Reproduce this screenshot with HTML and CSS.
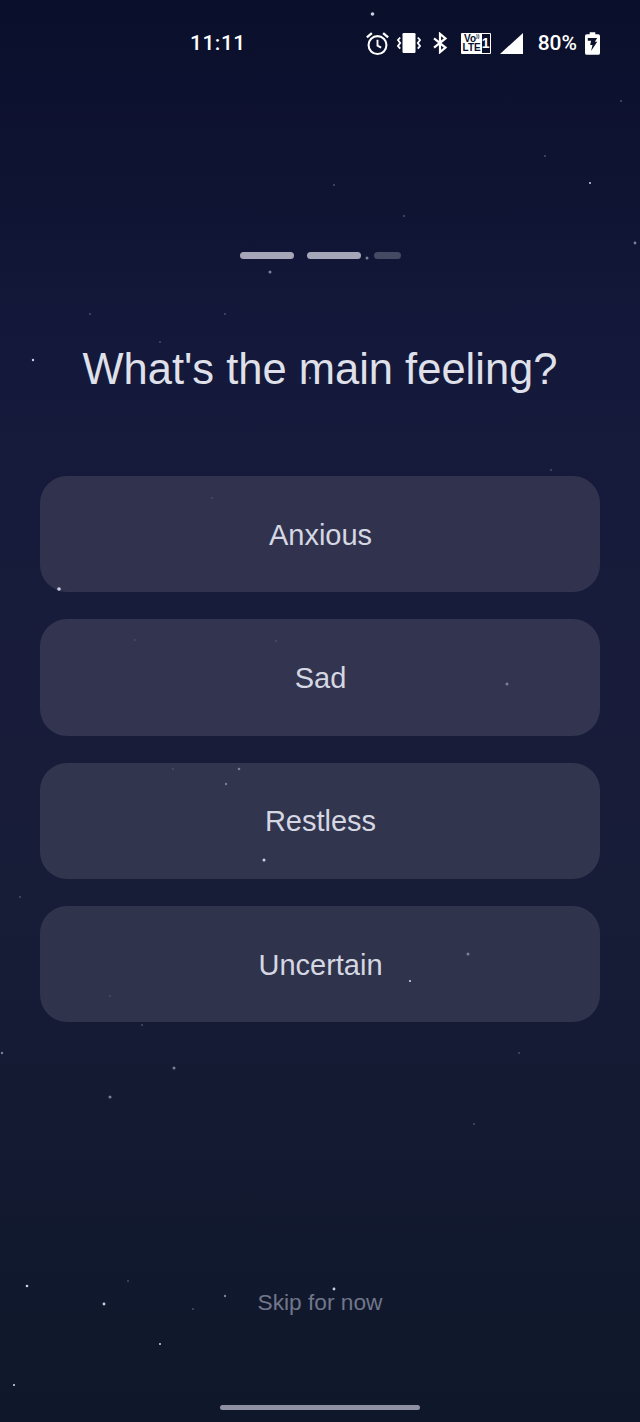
FILE: index.html
```html
<!DOCTYPE html>
<html lang="en">
<head>
<meta charset="utf-8">
<title>Main feeling</title>
<link rel="stylesheet" href="styles.css">
</head>
<body>
<div class="screen">
  <header class="status">
    <span class="time">11:11</span>
    <div class="status-icons">
      <svg class="ic-alarm" viewBox="0 0 24 24" fill="none" stroke="#fff"><circle cx="12" cy="13.5" r="8.6" stroke-width="2"/><path d="M12 8.500v5.500l3.500 2" stroke-width="1.800"/><path d="M1.800 6.200 6.600 2M22.200 6.200 17.400 2" stroke-width="2.200"/></svg>
      <svg class="ic-vib" viewBox="0 0 24 24" fill="none" stroke="#fff" stroke-width="1.800"><rect x="5.500" y="2" width="13" height="20" rx="1.200" fill="#fff" stroke="none"/><path d="M3.200 6.500 1 9l2.200 3L1 15l2.200 2.600M20.800 6.500 23 9l-2.200 3 2.200 3-2.200 2.600"/></svg>
      <svg class="ic-bt" viewBox="0 0 16 24" fill="none" stroke="#fff" stroke-width="2.400"><path d="M1.500 7 14 17l-6 5V2l6 5L1.500 17"/></svg>
      <span class="ic-volte"><span class="volte-box"><span>Vo<sup>))</sup></span><span>LTE</span></span><span class="volte-sim">1</span></span>
      <svg class="ic-signal" viewBox="0 0 24 24" preserveAspectRatio="none"><path d="M0 24 24 0v24z" fill="#fff"/></svg>
      <span class="pct">80%</span>
      <svg class="ic-batt" viewBox="0 0 16 24"><path d="M5 0h6v2h3a2 2 0 0 1 2 2v18a2 2 0 0 1-2 2H2a2 2 0 0 1-2-2V4a2 2 0 0 1 2-2h3z" fill="#fff"/><path d="M3 6h10l-2.500 4H13L6.500 20l1.500-6.500H5.500L6.500 9H3z" fill="#0b0f2c"/></svg>
    </div>
  </header>

  <div class="progress">
    <span class="seg on"></span>
    <span class="seg on"></span>
    <span class="seg off"></span>
  </div>

  <h1 class="title">What's the main feeling?</h1>

  <div class="options">
    <button class="option opt-a">Anxious</button>
    <button class="option opt-b">Sad</button>
    <button class="option opt-c">Restless</button>
    <button class="option opt-d">Uncertain</button>
  </div>

  <a class="skip">Skip for now</a>
  <div class="home"></div>

  <svg class="stars" viewBox="0 0 640 1422">
    <g fill="#cdd0e2">
      <circle cx="372.500" cy="14" r="1.800"/><circle cx="33" cy="360" r="1.200"/><circle cx="59" cy="589" r="1.800"/>
      <circle cx="264" cy="860" r="1.500"/><circle cx="410" cy="981" r="1.100"/><circle cx="104" cy="1304" r="1.400"/>
      <circle cx="334" cy="1289" r="1.400"/><circle cx="590" cy="183" r="1"/><circle cx="27" cy="1286" r="1.300"/>
      <circle cx="160" cy="1344" r="1"/><circle cx="14" cy="1385" r="1.100"/>
    </g>
    <g fill="#7b7f98">
      <circle cx="367" cy="258" r="1.500"/><circle cx="270" cy="272" r="1.500"/><circle cx="635" cy="243" r="1.400"/>
      <circle cx="507" cy="684" r="1.500"/><circle cx="239" cy="769" r="1.300"/><circle cx="226" cy="784" r="1.200"/>
      <circle cx="468" cy="954" r="1.500"/><circle cx="2" cy="1053" r="1.200"/><circle cx="174" cy="1068" r="1.500"/>
      <circle cx="110" cy="1097" r="1.500"/><circle cx="225" cy="1296" r="1.200"/><circle cx="310" cy="378" r="1.200"/>
    </g>
    <g fill="#4a4e68">
      <circle cx="545" cy="156" r="1"/><circle cx="334" cy="185" r="1"/><circle cx="404" cy="216" r="1"/>
      <circle cx="621" cy="101" r="1"/><circle cx="90" cy="314" r="1"/><circle cx="225" cy="314" r="1"/>
      <circle cx="160" cy="342" r="1"/><circle cx="551" cy="470" r="1"/><circle cx="212" cy="498" r="1"/>
      <circle cx="135" cy="640" r="1"/><circle cx="276" cy="641" r="1"/><circle cx="173" cy="769" r="1"/>
      <circle cx="20" cy="897" r="1"/><circle cx="110" cy="996" r="1"/><circle cx="142" cy="1025" r="1"/>
      <circle cx="519" cy="1053" r="1"/><circle cx="474" cy="1124" r="1"/><circle cx="128" cy="1281" r="1"/>
      <circle cx="193" cy="1309" r="1"/>
    </g>
  </svg>
</div>
</body>
</html>
```
FILE: styles.css
```css
* { box-sizing: border-box; }
html, body { margin: 0; padding: 0; }
body { width: 640px; height: 1422px; overflow: hidden; font-family: "Liberation Sans", Arial, sans-serif; }

.screen {
  position: relative;
  width: 640px;
  height: 1422px;
  display: flex;
  flex-direction: column;
  align-items: center;
  background: linear-gradient(180deg, #0a0f2b 0%, #14183a 25%, #181c3b 42%, #171c37 65%, #131a31 80%, #0f172a 100%);
}

.status {
  width: 100%;
  height: 86px;
  flex: none;
  display: flex;
  align-items: center;
  padding: 0 40px 0 190px;
  color: #fff;
  font-family: Roboto, sans-serif;
  font-weight: 500;
}
.time { font-size: 21px; letter-spacing: 0.5px; }
.status-icons { margin-left: auto; display: flex; align-items: center; }
.ic-alarm { width: 25px; height: 25px; }
.ic-vib { width: 24px; height: 24px; margin-left: 7px; }
.ic-bt { width: 18px; height: 22px; margin-left: 10px; }
.ic-volte { display: flex; align-items: stretch; width: 30px; height: 21px; margin-left: 12px; background: #fff; padding: 1px; border-radius: 1px; }
.volte-box { flex: 1; background: #fff; display: flex; flex-direction: column; align-items: center; justify-content: center; color: #0b0f2c; font: 700 10px/9px "Liberation Sans", sans-serif; }
.volte-box sup { font-size: 5px; line-height: 0; }
.volte-sim { width: 8px; background: #0b0f2c; color: #fff; font: 700 14px/19px "Liberation Sans", sans-serif; text-align: center; }
.ic-signal { width: 23px; height: 21px; margin-left: 9px; }
.pct { font-size: 21px; margin-left: 15px; }
.ic-batt { width: 15px; height: 23px; margin-left: 8px; }

.progress { margin-top: 166px; height: 7px; display: flex; gap: 13px; flex: none; }
.seg { display: block; height: 7px; border-radius: 4px; }
.seg.on { width: 54px; background: #a5a7b8; }
.seg.off { width: 27px; background: #454a63; }

.title {
  margin: 85px 0 0;
  height: 50px;
  font-size: 43.500px;
  line-height: 50px;
  font-weight: 400;
  color: #dfe0e9;
  white-space: nowrap;
  flex: none;
}

.options { margin-top: 82px; width: 560px; display: flex; flex-direction: column; gap: 27px; flex: none; }
.option {
  height: 116.330px;
  border: 0;
  border-radius: 27px;
  font-family: inherit;
  font-size: 29px;
  color: #d5d7e2;
  text-align: center;
  padding: 2px 0 0 1px;
}
.opt-a { background: #31334e; }
.opt-b { background: #323450; }
.opt-c { background: #31354e; }
.opt-d { background: #2f334b; }

.skip { margin-top: 267px; font-size: 22.700px; line-height: 26px; font-weight: 400; color: #71768a; flex: none; }

.home { position: absolute; left: 220px; top: 1405px; width: 200px; height: 5px; border-radius: 3px; background: #8f91a3; }

.stars { position: absolute; inset: 0; width: 640px; height: 1422px; pointer-events: none; }
```
